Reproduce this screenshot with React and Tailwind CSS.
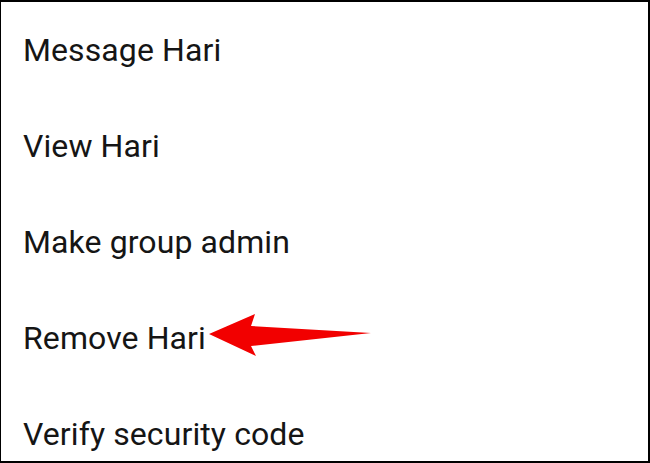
const items = [
  "Message Hari",
  "View Hari",
  "Make group admin",
  "Remove Hari",
  "Verify security code",
];

function Arrow() {
  // red annotation arrow pointing at the row label
  return (
    <svg
      className="pointer-events-none absolute left-[200px] top-[19px]"
      width="175"
      height="52"
      viewBox="0 0 175 52"
    >
      <polygon
        points="8,25 54,5 50,17 170,24 50,37 55,47"
        fill="#f20000"
      />
    </svg>
  );
}

export default function App() {
  return (
    <div className="h-[463px] w-[650px] overflow-hidden bg-white">
      <div className="h-full w-full border-b-2 border-l border-r-2 border-t-2 border-black">
        <ul className="flex flex-col">
          {items.map((label) => (
            <li
              key={label}
              className="relative h-[96px] pl-[22px] text-[32px] leading-[96px] tracking-[0.1px] text-[#151515]"
              style={{ fontFamily: "Roboto, 'Noto Sans', sans-serif" }}
            >
              {label}
              {label === "Remove Hari" && <Arrow />}
            </li>
          ))}
        </ul>
      </div>
    </div>
  );
}
